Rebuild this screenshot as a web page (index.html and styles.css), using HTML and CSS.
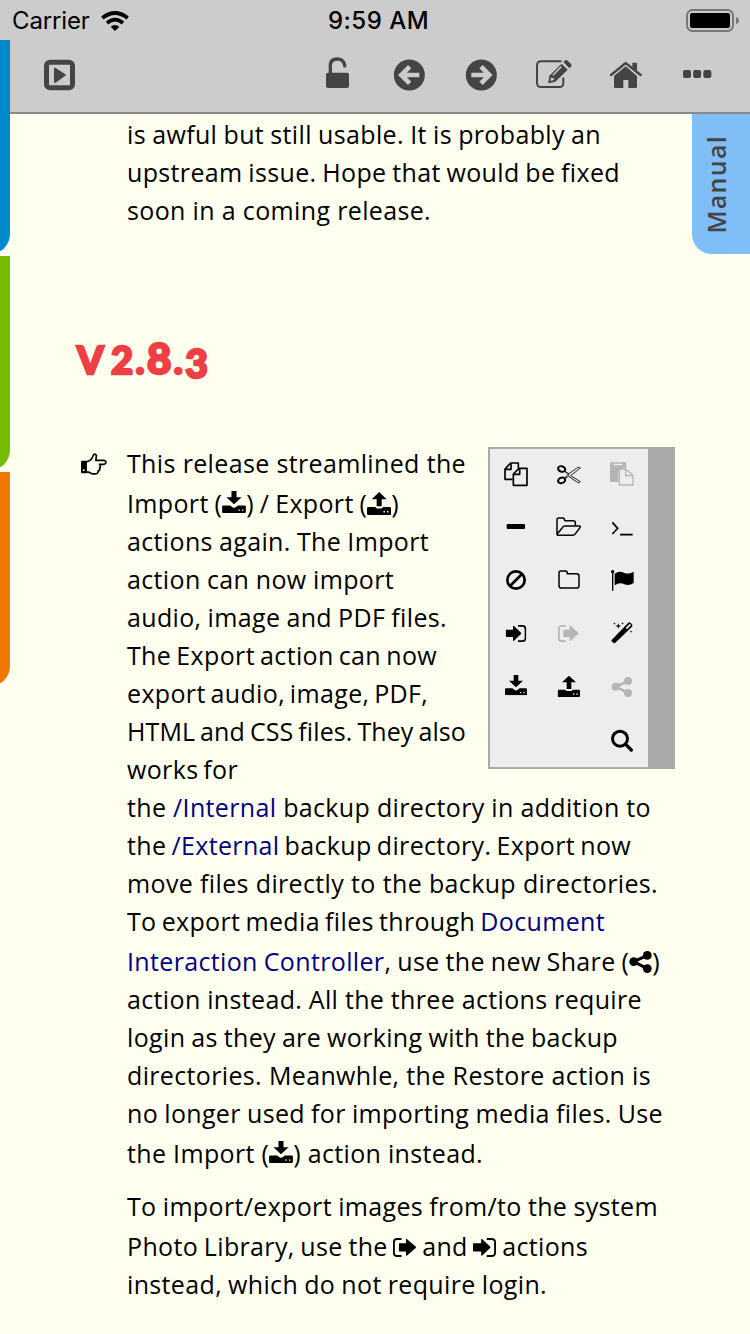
FILE: index.html
```html
<!DOCTYPE html>
<html lang="en">
<head>
<meta charset="utf-8">
<title>Manual</title>
<link rel="stylesheet" href="styles.css">
</head>
<body>
<svg class="defs" aria-hidden="true">
  <symbol id="download" viewBox="12 12 66 61">
    <path d="M38 12h14v17h14L45 49 24 29h14z"/>
    <path fill-rule="evenodd" d="M15 52h19l7 5q4 3 8 0l7-5h19q3 0 3 3v15q0 3-3 3H15q-3 0-3-3V55q0-3 3-3zM57 63v4h4v-4zM67 63v4h4v-4z"/>
  </symbol>
  <symbol id="upload" viewBox="11 14 67 64">
    <path d="M45 14 66 34H52v20H38V34H24z"/>
    <path fill-rule="evenodd" d="M14 56h20q2 4 5 4h12q3 0 5-4h19q3 0 3 3v16q0 3-3 3H14q-3 0-3-3V59q0-3 3-3zM57 67v4h4v-4zM67 67v4h4v-4z"/>
  </symbol>
  <symbol id="share" viewBox="14 18 61 60">
    <path d="M26 47 63 30M26 47 63 66" fill="none" stroke="currentColor" stroke-width="8"/>
    <circle cx="26" cy="47" r="12"/><circle cx="63" cy="30" r="12"/><circle cx="63" cy="66" r="12"/>
  </symbol>
  <symbol id="signin" viewBox="14 21 62 51">
    <path d="M16 35h20V25q0-3 3-1l21 20q2 2 0 4L39 68q-3 2-3-1V57H16q-2 0-2-2V37q0-2 2-2z"/>
    <path d="M51 23.500h13q9.500 0 9.500 9.500v27q0 9.500-9.500 9.500H51" fill="none" stroke="currentColor" stroke-width="5"/>
  </symbol>
  <symbol id="signout" viewBox="12 21 62 51">
    <path d="M30 35h17V25q0-3 3-1l23 20q2 2 0 4L50 68q-3 2-3-1V57H30q-2 0-2-2V37q0-2 2-2z"/>
    <path d="M35 23.500H23q-8.500 0-8.500 8.500v29q0 8.500 8.500 8.500h12" fill="none" stroke="currentColor" stroke-width="5"/>
  </symbol>
</svg>

<header class="header">
  <div class="status">
    <div class="carrier">
      <span>Carrier</span>
      <svg class="wifi" viewBox="0 0 84 60"><g fill="none" stroke="#000" stroke-width="11"><path d="M4 21Q42-9 80 21"/><path d="M18 36Q42 16 66 36"/></g><path d="M42 60 29 47q13-10 26 0z"/></svg>
    </div>
    <span class="clock">9:59 AM</span>
    <svg class="battery" viewBox="0 0 53 24"><rect x="1" y="1" width="46" height="21" rx="5.5" fill="none" stroke="#777" stroke-width="2"/><rect x="4" y="4" width="40" height="15" rx="2"/><path d="M50 8q3 1 3 3.5T50 15z" fill="#777"/></svg>
  </div>
  <nav class="toolbar">
    <svg class="tool" viewBox="0 0 120 120"><rect x="19.500" y="21.500" width="78" height="77" rx="11" fill="none" stroke="currentColor" stroke-width="15"/><path d="M42 42q0-5 5-3l29 19q3 2 0 4L47 83q-5 2-5-3z"/></svg>
    <div class="tools">
      <svg class="tool" viewBox="0 0 120 120"><rect x="27" y="53" width="69" height="46" rx="6"/><path d="M40 55V31q0-19 21-19 17 0 22 17v4" fill="none" stroke="currentColor" stroke-width="10" stroke-linecap="round"/></svg>
      <svg class="tool" viewBox="0 0 120 120"><circle cx="61" cy="60" r="46.500"/><path d="M91 60H43M62 35 37 60l25 25" fill="none" stroke="#ccc" stroke-width="14"/></svg>
      <svg class="tool" viewBox="0 0 120 120"><circle cx="61" cy="60" r="46.500"/><path d="M31 60h48M60 35l25 25-25 25" fill="none" stroke="#ccc" stroke-width="14"/></svg>
      <svg class="tool" viewBox="0 0 120 120"><path d="M83 19H25Q12 19 12 32v51q0 13 13 13h54q12 0 12-13V70" fill="none" stroke="currentColor" stroke-width="6" stroke-linecap="round"/><path fill-rule="evenodd" d="M86 26l18 18-37 36-20 5q-2 0-1-3l3-20zM54 66l-2 12 11-3-1-6-7 0zM61 62l26-26-4-2-25 25z"/><path d="M91 21l5-5q4-3 8 1l10 10q4 4 1 7l-6 6z"/></svg>
      <svg class="tool" viewBox="0 0 120 120"><path d="M18 60 62 24l45 36" fill="none" stroke="currentColor" stroke-width="7" stroke-linecap="round"/><path d="M82 23h14v25L82 36zM62 34l34 29v33q0 3-3 3H70V75H55v24H31q-4 0-4-4V63z"/></svg>
      <svg class="tool" viewBox="0 0 120 120"><rect x="18" y="45" width="24" height="24" rx="6"/><rect x="48.500" y="45" width="24" height="24" rx="6"/><rect x="79" y="45" width="24" height="24" rx="6"/></svg>
    </div>
  </nav>
</header>

<div class="edge edge-blue"></div>
<div class="edge edge-green"></div>
<div class="edge edge-orange"></div>
<div class="manual-tab"><span>Manual</span></div>

<main class="page">
  <div class="copy">
    <div class="line w474">is awful but still usable. It is probably an</div>
    <div class="line w493">upstream issue. Hope that would be fixed</div>
    <div class="line w304">soon in a coming release.</div>
  </div>
  <h1 class="version">V 2.<span class="eight">8</span>.<span class="three">3</span></h1>
  <div class="entry">
    <svg class="hand" viewBox="0 0 79 66"><path d="M18 26Q33 22 37 7q5-8 10 0l-2 15h25q6 1 6 6t-6 6H56q6 7 0 11 4 7-4 9 1 8-8 9H34Q25 57 17 57" fill="none" stroke="#000" stroke-width="5" stroke-linejoin="round"/><path fill-rule="evenodd" d="M4 23h14v38H4q-4 0-4-4V27q0-4 4-4zM6 49v5h5v-5z"/></svg>
    <div class="copy">
      <div class="beside">
        <div class="narrow">
          <div class="line w339">This release streamlined the</div>
          <div class="line tall w272">Import (<svg class="ic ic-down"><use href="#download"/></svg>) / Export (<svg class="ic ic-up"><use href="#upload"/></svg>)</div>
          <div class="line w302">actions again. The Import</div>
          <div class="line w267">action can now import</div>
          <div class="line w320">audio, image and PDF files.</div>
          <div class="line w310">The Export action can now</div>
          <div class="line w301">export audio, image, PDF,</div>
          <div class="line tight w339">HTML and CSS files. They also</div>
          <div class="line w110">works for</div>
        </div>
        <div class="panel">
          <div class="grid">
            <svg viewBox="0 0 90 90"><g fill="none" stroke="#000" stroke-width="5" stroke-linejoin="round"><path d="M35 61H12V30L29 12h23v16M12 31h18V12"/><path d="M37 79V45l17-17h24v51zM37 46h19V28"/></g></svg>
            <svg viewBox="0 0 90 90"><g fill="none" stroke="#000" stroke-width="6"><ellipse cx="23" cy="30" rx="11" ry="8" transform="rotate(20 23 30)"/><ellipse cx="23" cy="64" rx="11" ry="8" transform="rotate(-20 23 64)"/></g><path d="M32 37 45 44 70 26q7-3 9 1L50 50 79 68q-3 6-9 2L44 52 32 58M32 37l10 9-10 12" fill="none" stroke="#222" stroke-width="3"/><circle cx="44" cy="48" r="2"/></svg>
            <svg class="off" viewBox="0 0 90 90"><path fill-rule="evenodd" d="M12 10h43q3 0 3 3v14H48L34 42v27H12q-3 0-3-3V13q0-3 3-3zM20 14v5h26v-5z"/><path d="M37 78V46l0-16h19l22 19v29zM56 31v19h22" fill="#ededed" stroke="currentColor" stroke-width="4"/></svg>
            <svg viewBox="0 0 90 90"><rect x="17" y="36" width="55" height="15" rx="3"/></svg>
            <svg viewBox="0 0 90 90"><path d="M9 65V23q0-5 5-5h12q6 0 6 8h26q6 0 6 6v9M9 67l16-20q3-5 8-5h42q6 0 3 5L65 64q-4 6-9 6H14q-6 0-5-4" fill="none" stroke="#000" stroke-width="4.500" stroke-linejoin="round"/></svg>
            <svg viewBox="0 0 90 90"><path d="M16 31l16 18-16 17M39 68h38" fill="none" stroke="#000" stroke-width="5"/></svg>
            <svg viewBox="0 0 90 90"><g fill="none" stroke="#000" stroke-width="8"><circle cx="45" cy="45" r="26"/><path d="M27 63 63 27"/></g></svg>
            <svg viewBox="0 0 90 90"><path d="M20 18h14q6 0 6 8h28q7 0 7 7v29q0 7-7 7H22q-7 0-7-7V24q0-6 5-6z" fill="none" stroke="#000" stroke-width="4.500"/></svg>
            <svg viewBox="0 0 90 90"><circle cx="17" cy="20" r="5"/><path d="M15 20h4v57h-4zM23 26q15-10 29-2 12 5 28-4v34q-14 10-28 4-14-7-29 3z"/></svg>
            <svg viewBox="0 0 90 90"><use href="#signin" x="14" y="21" width="62" height="51"/></svg>
            <svg class="off" viewBox="0 0 90 90"><use href="#signout" x="12" y="21" width="62" height="51"/></svg>
            <svg viewBox="0 0 90 90"><path fill-rule="evenodd" d="M14 66 63 15q4-4 8 0l4 4q3 4 0 7L25 74q-3 3-6 0l-5-4q-2-2 0-4zM56 30l4 4 12-12q0-3-4-4z"/><path d="M34 15l2 7 7 2-7 2-2 7-2-7-7-2 7-2zM22 13l1 3 3 1-3 1-1 3-1-3-3-1 3-1zM47 12l1 3 3 1-3 1-1 3-1-3-3-1 3-1zM72 37l1 3 3 1-3 1-1 3-1-3-3-1 3-1z"/></svg>
            <svg viewBox="0 0 90 90"><use href="#download" x="12" y="12" width="66" height="61"/></svg>
            <svg viewBox="0 0 90 90"><use href="#upload" x="11" y="14" width="67" height="64"/></svg>
            <svg class="off" viewBox="0 0 90 90"><use href="#share" x="14" y="18" width="61" height="60"/></svg>
            <svg class="last" viewBox="0 0 90 90"><circle cx="39" cy="41" r="22.500" fill="none" stroke="#000" stroke-width="9"/><path d="M56 58l17 17" stroke="#000" stroke-width="10" stroke-linecap="round"/></svg>
          </div>
        </div>
      </div>
      <div class="line w524">the <a>/Internal</a> backup directory in addition to</div>
      <div class="line w504">the <a>/External</a> backup directory. Export now</div>
      <div class="line w531">move files directly to the backup directories.</div>
      <div class="line w478">To export media files through <a>Document</a></div>
      <div class="line tall w533"><a>Interaction Controller</a>, use the new Share (<svg class="ic ic-share"><use href="#share"/></svg>)</div>
      <div class="line w515">action instead. All the three actions require</div>
      <div class="line w491">login as they are working with the backup</div>
      <div class="line w524">directories. Meanwhle, the Restore action is</div>
      <div class="line w536">no longer used for importing media files. Use</div>
      <div class="line tall w356">the Import (<svg class="ic ic-down"><use href="#download"/></svg>) action instead.</div>
      <div class="para">
        <div class="line w531">To import/export images from/to the system</div>
        <div class="line tall w461">Photo Library, use the <svg class="ic ic-sign"><use href="#signout"/></svg> and <svg class="ic ic-sign"><use href="#signin"/></svg> actions</div>
        <div class="line w420">instead, which do not require login.</div>
      </div>
    </div>
  </div>
</main>
</body>
</html>
```
FILE: styles.css
```css
* { box-sizing: border-box; }
body {
  margin: 0;
  width: 750px;
  height: 1334px;
  overflow: hidden;
  position: relative;
  background: #ffffef;
  color: #000;
  font-family: "Open Sans", "Noto Sans", sans-serif;
}
.defs { position: absolute; width: 0; height: 0; }
svg { display: block; fill: currentColor; }

.header { height: 114px; background: #ccc; border-bottom: 2px solid #888; }
.status {
  height: 40px;
  display: grid;
  grid-template-columns: 1fr auto 1fr;
  align-items: center;
  padding: 1px 11px 0 12px;
  font: 24px/30px Inter, sans-serif;
}
.carrier { display: flex; align-items: center; gap: 11px; letter-spacing: -0.15px; }
.wifi { width: 28px; height: 20px; }
.clock { font-weight: 500; letter-spacing: 0.5px; margin-left: 6px; }
.battery { width: 53px; height: 24px; justify-self: end; }
.toolbar {
  display: flex;
  justify-content: space-between;
  align-items: center;
  height: 70px;
  padding: 0 17px 0 40px;
  color: #444;
}
.tool { width: 40px; height: 40px; }
.tools { display: flex; gap: 32px; padding-right: 16px; }

.edge {
  position: absolute;
  left: -20px;
  width: 30px;
  height: 214px;
  border-bottom-right-radius: 20px;
}
.edge-blue { top: 40px; background: #08c; }
.edge-green { top: 256px; background: #7b0; }
.edge-orange { top: 472px; background: #f07800; }
.manual-tab {
  position: absolute;
  top: 114px;
  right: 0;
  width: 58px;
  height: 140px;
  padding-right: 10px;
  display: flex;
  align-items: center;
  justify-content: center;
  background: #80bef8;
  border-bottom-left-radius: 20px;
  color: #444;
  font-size: 25px;
  font-weight: 600;
  letter-spacing: 1.3px;
}
.manual-tab span { writing-mode: vertical-rl; transform: rotate(180deg); }

.page { padding-top: 1px; }
.page > .copy { padding-left: 127px; }
.line {
  height: 38px;
  font-size: 25px;
  line-height: 38px;
  letter-spacing: 0.35px;
  word-spacing: -2px;
  white-space: nowrap;
  text-align-last: justify;
}
.tight { letter-spacing: 0.1px; }
.tall { height: 40px; padding-top: 2px; }
.line a { color: #000080; }
.version {
  margin: 95px 0 0 77px;
  height: 68px;
  font: 900 38px/70px Lato, sans-serif;
  letter-spacing: 2.4px;
  word-spacing: -5px;
  color: #ee4044;
  -webkit-text-stroke: 2.4px #ee4044;
}
.eight { font-size: 42px; line-height: 1; }
.three { font-size: 39px; vertical-align: -4px; line-height: 1; }
.entry { display: flex; margin-top: 52px; padding-left: 81px; }
.hand { width: 26px; height: 22px; margin: 9px 20px 0 0; flex: none; }
.beside { display: flex; }
.narrow { width: 361px; }
.panel {
  width: 187px;
  height: 322px;
  margin-top: 3px;
  background: #ededed;
  border: 2px solid #aaa;
  border-right: 27px solid #a9a9a9;
}
.grid {
  display: grid;
  grid-template-columns: repeat(3, 53.2px);
  grid-auto-rows: 53.2px;
  place-items: center;
  margin: -2px 0 0 -1px;
}
.grid svg { width: 30px; height: 30px; }
.grid .off { color: #b5b5b5; }
.last { grid-column: 3; }
.ic { display: inline-block; vertical-align: -2px; }
.ic-down { width: 24px; height: 22px; vertical-align: 0; }
.ic-up { width: 24px; height: 23px; }
.ic-share { width: 23px; height: 22px; }
.ic-sign { width: 23px; height: 19px; vertical-align: -1px; }
.para { margin-top: 15px; }

.w110 { width: 110px; }
.w267 { width: 267px; }
.w272 { width: 272px; }
.w301 { width: 301px; }
.w302 { width: 302px; }
.w304 { width: 304px; }
.w310 { width: 310px; }
.w320 { width: 320px; }
.w339 { width: 339px; }
.w356 { width: 356px; }
.w420 { width: 420px; }
.w461 { width: 461px; }
.w474 { width: 474px; }
.w478 { width: 478px; }
.w491 { width: 491px; }
.w493 { width: 493px; }
.w504 { width: 504px; }
.w515 { width: 515px; }
.w524 { width: 524px; }
.w531 { width: 531px; }
.w533 { width: 533px; }
.w536 { width: 536px; }
```
